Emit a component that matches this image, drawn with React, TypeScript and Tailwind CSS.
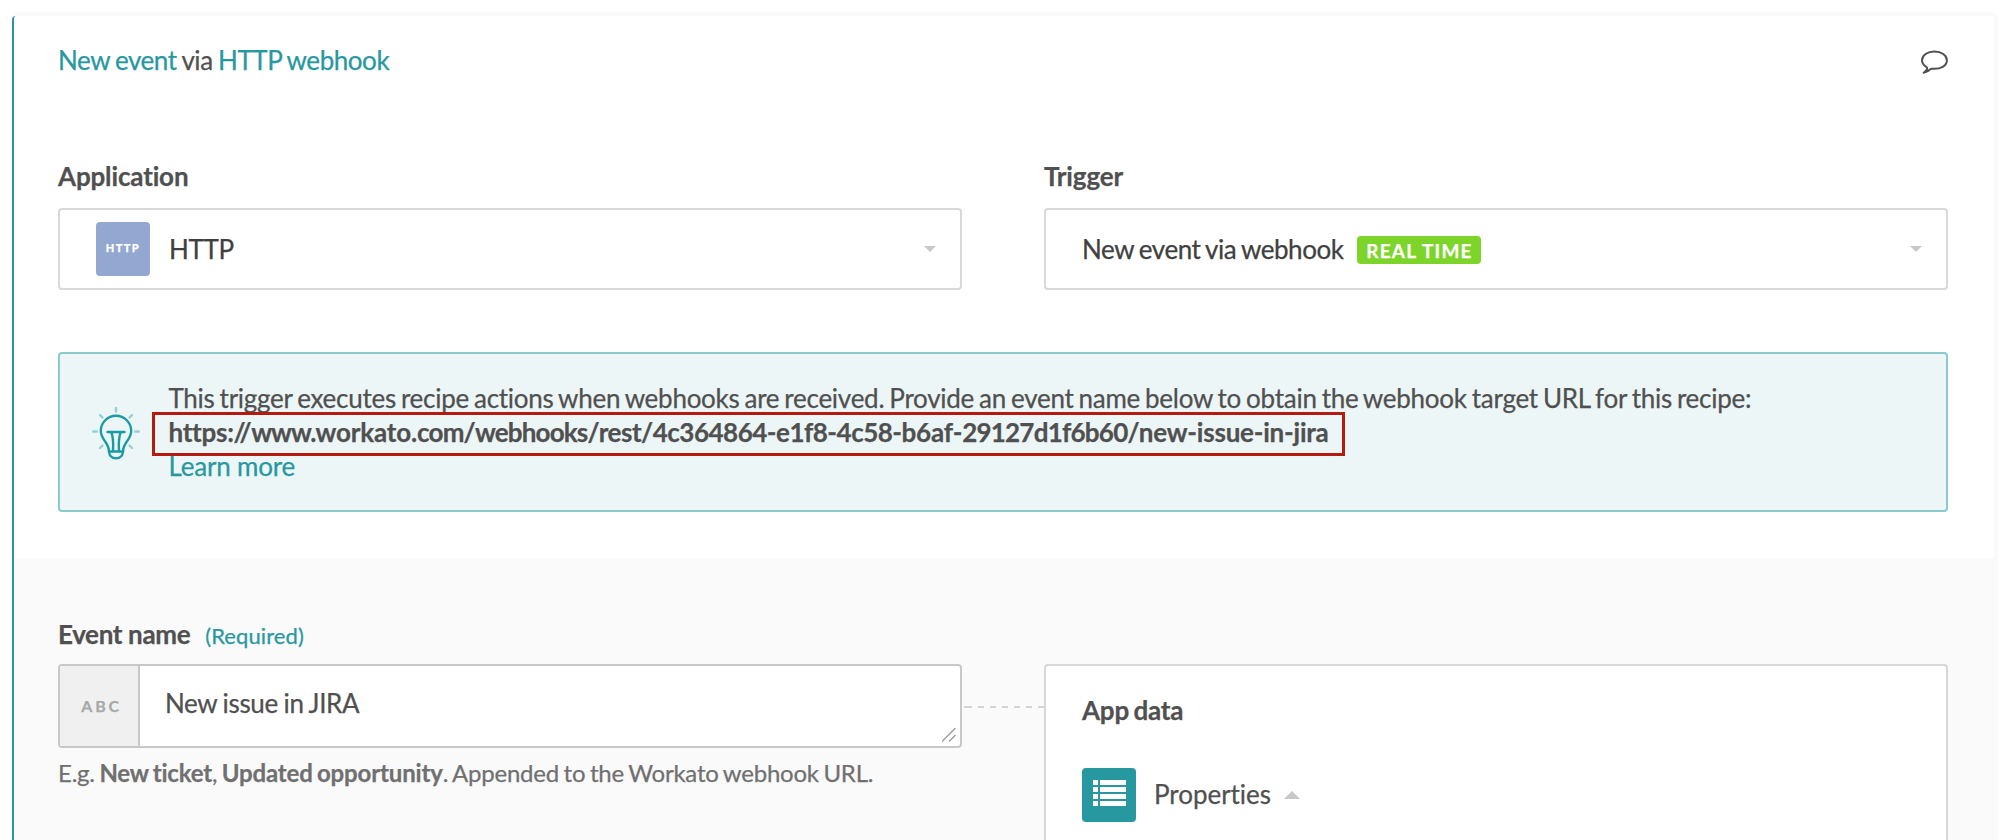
import type { ReactNode } from "react";

function Caret({ up = false }: { up?: boolean }) {
  return up ? (
    <svg className="ml-[13px] h-2 w-4" viewBox="0 0 16 8" fill="#c8c8c8">
      <path d="M8 0 16 8H0Z" />
    </svg>
  ) : (
    <svg className="h-[6px] w-3" viewBox="0 0 12 6" fill="#c8c8c8">
      <path d="M0 0H12L6 6Z" />
    </svg>
  );
}

function Field({ label, children }: { label: string; children: ReactNode }) {
  return (
    <div className="w-[904px]">
      <div className="h-[49px] font-bold leading-[34px] tracking-[-0.150px]">{label}</div>
      <div className="flex h-[82px] items-center rounded border-2 border-[#d8d8d8] bg-white pr-[24px] text-[#404040]">
        {children}
        <div className="ml-auto">
          <Caret />
        </div>
      </div>
    </div>
  );
}

function CommentIcon() {
  return (
    <svg className="mt-[10px] h-6 w-7" viewBox="0 0 28 24" fill="none" stroke="#505050" strokeWidth="2" strokeLinejoin="round">
      <path d="M14.400 1.500C7.500 1.500 2 5.300 2 10.300C2 13 3.700 15.400 6.500 17.100C7.600 17.700 7.400 18.200 7 19.200C6.500 20.600 5.200 21.800 3.600 22.800C6.300 22.300 8.700 20.900 10.300 19.300C10.900 18.700 11.400 18.600 12.200 18.700C20.800 19.500 26.900 15.700 26.900 10.300C26.900 5.300 21.300 1.500 14.400 1.500Z" />
    </svg>
  );
}

function BulbIcon() {
  return (
    <svg className="h-[54px] w-[50px]" viewBox="0 0 50 54" fill="none" strokeWidth="2.4" strokeLinecap="round" strokeLinejoin="round">
      <path stroke="#97cfd3" d="M25 2V5.500M9 9 11.500 11.500M41 9 38.500 11.500M2.200 25.500H5.800M44.200 25.500H47.800M9 42 11.500 39.500M41 42 38.500 39.500" />
      <g stroke="#1a9ba3">
        <path d="M18 45.500C18 36 9.800 34 9.800 25A15.200 15.200 0 0 1 40.200 25C40.200 34 32 36 32 45.500Z" />
        <path d="M18 45.500C18.300 50 21 52.300 25 52.300S31.700 50 32 45.500" />
        <path d="M16.500 26H33.500M20.300 26C22.500 32 22.500 38 22 45M29.700 26C27.500 32 27.500 38 28 45" />
      </g>
    </svg>
  );
}

function ListIcon() {
  return (
    <div className="flex h-[54px] w-[54px] justify-center rounded bg-[#2898a0] pt-3">
      <svg className="h-[26px] w-[33px]" viewBox="0 0 33 26" fill="#fff">
        <path d="M0 0h5v5H0zM7 0h26v5H7zM0 7h5v5H0zM7 7h26v5H7zM0 14h5v5H0zM7 14h26v5H7zM0 21h5v5H0zM7 21h26v5H7z" />
      </svg>
    </div>
  );
}

export default function App() {
  return (
    <div className="h-[840px] w-[2008px] overflow-hidden bg-white pl-3 pt-3 font-[Lato,sans-serif] text-[26px] leading-[34px] text-[#505050] [-webkit-text-stroke:0.25px] [font-variant-ligatures:none]">
      <div className="h-[828px] w-[1986px] rounded-t-md bg-[#fafafa] pt-1">
        <div className="h-[824px] rounded-tl border-l-2 border-[#2898a0]">
          <div className="mr-1 h-[542px] rounded-tl-sm bg-white pl-11 pr-[46px] pt-[24px]">
            <div className="flex h-[116px] justify-between">
              <div className="pt-[3px] tracking-[-0.450px] [word-spacing:-0.800px]">
                <span className="text-[#2898a0]">New event</span> via <span className="text-[#2898a0]">HTTP webhook</span>
              </div>
              <CommentIcon />
            </div>
            <div className="mt-[3px] flex justify-between">
              <Field label="Application">
                <div className="ml-9 mr-[19px] flex h-[54px] w-[54px] items-center justify-center rounded bg-[#94a7d0] pb-[3px] text-[11px] font-black leading-none tracking-[1.400px] text-white">
                  HTTP
                </div>
                <span className="tracking-[-0.350px]">HTTP</span>
              </Field>
              <Field label="Trigger">
                <span className="ml-9 tracking-[-0.450px] [word-spacing:-1px]">New event via webhook</span>
                <span className="ml-[14px] mt-[2px] flex h-7 w-[124px] items-center justify-center rounded bg-[#7ed52a] text-[19px] font-bold leading-none tracking-[1.200px] text-white">
                  REAL TIME
                </span>
              </Field>
            </div>
            <div className="relative mt-[62px] flex h-[160px] rounded border-2 border-[#8ac9cc] bg-[#edf6f7] pl-[31px] pt-[27px]">
              <div className="mr-[27.500px] pt-[25px]">
                <BulbIcon />
              </div>
              <div>
                <p className="tracking-[-0.260px] [word-spacing:-1.400px]">
                  This trigger executes recipe actions when webhooks are received. Provide an event name below to obtain the webhook target URL for this recipe:
                </p>
                <p className="font-bold tracking-[-0.500px]">
                  <span className="tracking-[-0.270px]">https://</span>
                  <span className="tracking-[-1px]">www.</span>
                  <span className="tracking-[-0.160px]">workato.</span>
                  <span className="tracking-[-0.820px]">com/webhooks/</span>
                  rest/4c364864-e1f8-4c58-
                  <span className="tracking-[-0.210px]">b6af-</span>
                  <span className="tracking-[-0.770px]">29127d1f6b60/</span>
                  <span className="tracking-[-0.220px]">new-issue-in-jira</span>
                </p>
                <p className="tracking-[-0.200px] text-[#2898a0]">Learn more</p>
              </div>
              <div className="absolute left-[92px] top-[58px] h-[44px] w-[1193px] border-3 border-[#b51a10]" />
            </div>
          </div>
          <div className="flex pl-11 pt-[60px]">
            <div className="w-[904px]">
              <div className="-mt-px flex h-[47px] items-baseline">
                <span className="font-bold tracking-[-0.350px]">Event name</span>
                <span className="ml-[15px] text-[22px] tracking-[0.100px] text-[#2898a0]">(Required)</span>
              </div>
              <div className="flex h-[84px] rounded border-2 border-[#c8c8c8] bg-white">
                <div className="flex w-[80px] items-center justify-center border-r-2 border-[#c8c8c8] bg-[#f0f0f0] pl-[5px] text-[16px] font-bold tracking-[2.700px] text-[#a8a8a8]">
                  ABC
                </div>
                <div className="pl-[25px] pt-[20px] tracking-[-0.350px] [word-spacing:-0.600px]">New issue in JIRA</div>
                <svg className="mb-1 ml-auto mr-1 h-[14px] w-[14px] self-end" viewBox="0 0 14 14" stroke="#a0a0a0" strokeWidth="1.500">
                  <path d="M0 13.500 13.500 0M7 13.500 13.500 7" />
                </svg>
              </div>
              <p className="pt-2 text-[24px] tracking-[-0.220px] text-[#707070] [word-spacing:-1.300px]">
                E.g. <b className="tracking-[-0.200px]">New ticket</b>, <b className="tracking-[-0.160px]">Updated opportunity</b>. Appended to the Workato webhook URL.
              </p>
            </div>
            <svg className="mt-[88px] h-[2px] w-[82px]" viewBox="0 0 82 2" fill="#d4d4d4">
              <path d="M2 0h8v2H2zM16 0h6v2h-6zM28 0h6v2h-6zM40 0h6v2h-6zM52 0h6v2h-6zM64 0h6v2h-6zM76 0h6v2h-6z" />
            </svg>
            <div className="mt-[46px] h-[240px] w-[904px] rounded border-2 border-[#d8d8d8] bg-white pl-9 pt-[27px]">
              <div className="font-bold tracking-[-0.200px] [word-spacing:-1.600px]">App data</div>
              <div className="mt-[41px] flex items-center">
                <ListIcon />
                <span className="-mt-[2px] ml-[18px] tracking-[-0.040px]">Properties</span>
                <Caret up />
              </div>
            </div>
          </div>
        </div>
      </div>
    </div>
  );
}
